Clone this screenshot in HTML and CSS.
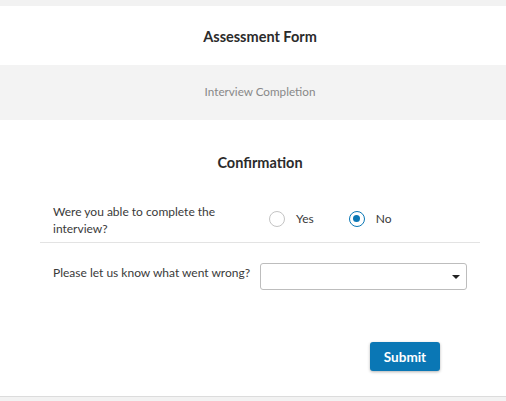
FILE: index.html
```html
<!DOCTYPE html>
<html>
<head>
<meta charset="utf-8">
<link rel="stylesheet" href="styles.css">
</head>
<body>
<div class="page">
  <div class="header">Assessment Form</div>
  <div class="subheader">Interview Completion</div>
  <div class="content">
    <div class="section-title">Confirmation</div>
    <div class="row row-first">
      <div class="label">Were you able to complete the interview?</div>
      <div class="control radios">
        <label class="radio"><span class="circle"></span><span>Yes</span></label>
        <label class="radio checked"><span class="circle"></span><span>No</span></label>
      </div>
    </div>
    <div class="row row-second">
      <div class="label">Please let us know what went wrong?</div>
      <div class="control">
        <div class="select"><span class="caret"></span></div>
      </div>
    </div>
    <div class="actions">
      <button class="submit">Submit</button>
    </div>
  </div>
</div>
</body>
</html>
```
FILE: styles.css
```css
html, body {
  margin: 0;
  padding: 0;
}
body {
  background: #f2f2f2;
  font-family: "Lato", "Noto Sans", sans-serif;
  color: #333;
  width: 506px;
  height: 401px;
  overflow: hidden;
}
.page {
  margin-top: 6px;
  background: #fff;
  height: 390px;
  border-bottom: 1px solid #dcdcdc;
  display: flex;
  flex-direction: column;
}
.header {
  height: 59px;
  display: flex;
  align-items: center;
  justify-content: center;
  font-weight: 700;
  font-size: 14.5px;
  color: #2b2b2b;
  padding-top: 2px;
  padding-left: 14px;
  box-sizing: border-box;
}
.subheader {
  height: 55px;
  box-sizing: border-box;
  padding-bottom: 3px;
  background: #f3f3f3;
  display: flex;
  align-items: center;
  justify-content: center;
  font-size: 11.7px;
  color: #888;
  padding-left: 14px;
}
.content {
  padding: 34px 26px 0 40px;
}
.section-title {
  text-align: center;
  font-weight: 700;
  font-size: 14.5px;
  color: #2b2b2b;
  line-height: 18px;
  width: 440px;
}
.row {
  display: grid;
  grid-template-columns: 220px 207px;
  font-size: 12px;
  color: #3a3a3a;
}
.row-first {
  margin-top: 31px;
  padding-bottom: 5px;
  border-bottom: 1px solid #e3e3e3;
  width: 440px;
  align-items: center;
}
.label {
  padding-left: 13px;
  line-height: 17px;
}
.row-first .label {
  width: 175px;
}
.radios {
  display: flex;
  gap: 35px;
  padding-left: 9px;
  margin-top: -3px;
}
.radio {
  display: flex;
  align-items: center;
  gap: 11px;
}
.circle {
  width: 16px;
  height: 16px;
  border: 1px solid #c4c4c4;
  border-radius: 50%;
  box-sizing: border-box;
  position: relative;
  display: inline-block;
}
.checked .circle {
  border: 1.5px solid #0a77b5;
}
.checked .circle::after {
  content: "";
  position: absolute;
  left: 3px;
  top: 3px;
  width: 7px;
  height: 7px;
  border-radius: 50%;
  background: #0a77b5;
}
.row-second {
  margin-top: 20px;
}
.row-second .label {
  padding-top: 1px;
}
.select {
  height: 27px;
  border: 1px solid #bdbdbd;
  border-radius: 3px;
  box-sizing: border-box;
  display: flex;
  align-items: center;
  justify-content: flex-end;
  padding-right: 6px;
}
.caret {
  width: 0;
  height: 0;
  border-left: 4px solid transparent;
  border-right: 4px solid transparent;
  border-top: 4px solid #222;
}
.actions {
  display: flex;
  justify-content: flex-end;
  margin-top: 52px;
  padding-right: 40px;
}
.submit {
  width: 70px;
  height: 29px;
  background: #0a77b5;
  border: none;
  border-radius: 3px;
  color: #fff;
  font-family: "Lato", "Noto Sans", sans-serif;
  font-weight: 700;
  font-size: 13.5px;
  box-shadow: 0 1px 3px rgba(0,0,0,0.3);
}
```
